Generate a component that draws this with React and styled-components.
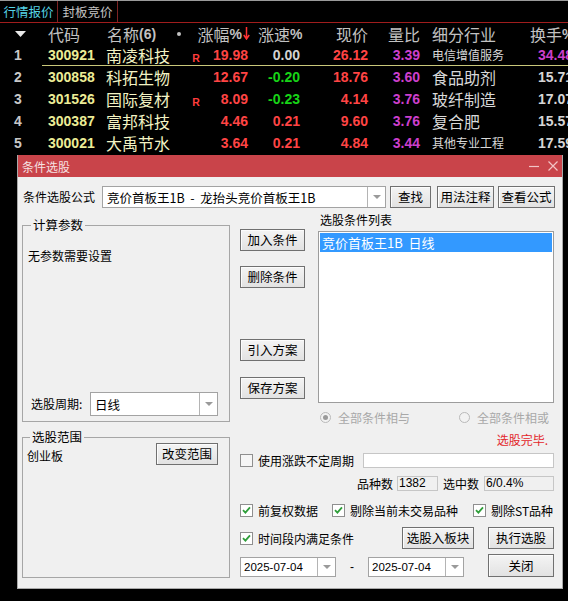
import React from 'react';
import styled, { createGlobalStyle } from 'styled-components';

const CJK = `"Noto Sans CJK SC", "Noto Sans", sans-serif`;
const NUM = `"Liberation Sans", Arial, sans-serif`;

const Global = createGlobalStyle`
  html, body { margin: 0; padding: 0; background: #000; }
  body { width: 568px; height: 601px; overflow: hidden; }
  #root { width: 568px; height: 601px; }
  * { box-sizing: border-box; }
`;

const Screen = styled.div`
  position: relative;
  width: 568px;
  height: 601px;
  background: #000;
  overflow: hidden;
  font-family: ${CJK};
`;

/* ---------- quote table ---------- */
const TabBar = styled.div`
  display: flex;
  height: 23px;
  border-top: 1px solid #9a9a9a;
  border-bottom: 1px solid #a11d1d;
`;

const Tab = styled.div`
  width: ${p => p.$w}px;
  height: 21px;
  line-height: 21px;
  text-align: center;
  font-size: 12.5px;
  color: ${p => (p.$active ? '#56d4e6' : '#c4c4c4')};
  border-right: 1px solid #7c2323;
`;

const COLS = '42px 62px 82px 18px 46px 52px 68px 52px 98px 1fr';

const HeadRow = styled.div`
  display: grid;
  grid-template-columns: ${COLS};
  height: 21px;
  align-items: center;
  color: #c2c2c2;
  font-size: 16px;
  white-space: nowrap;
`;

const Row = styled.div`
  position: relative;
  display: grid;
  grid-template-columns: ${COLS};
  height: 22px;
  align-items: center;
  white-space: nowrap;
  &::after {
    content: '';
    display: ${p => (p.$sel ? 'block' : 'none')};
    position: absolute;
    left: 42px;
    right: 0;
    bottom: 0;
    height: 1px;
    background: #c9c77a;
  }
`;

const Cell = styled.div`
  text-align: ${p => p.$align || 'left'};
  padding-left: ${p => p.$pl || 0}px;
  padding-right: ${p => p.$pr || 0}px;
  font-family: ${p => (p.$num ? NUM : CJK)};
  font-weight: ${p => (p.$num ? 700 : 400)};
  font-size: ${p => p.$fs || 14}px;
  color: ${p => p.$c || '#d0d0d0'};
  line-height: 22px;
  height: 22px;
`;

const HeadCell = styled.div`
  display: flex;
  align-items: center;
  justify-content: ${p => p.$justify || 'flex-start'};
  padding-left: ${p => p.$pl || 0}px;
  padding-right: ${p => p.$pr || 0}px;
  height: 21px;
`;

const Pct = styled.span`
  font-family: ${NUM};
  font-weight: 700;
  font-size: 14px;
`;

const HeadDot = styled.span`
  margin-left: auto;
  width: 4px;
  height: 4px;
  border-radius: 50%;
  background: #c2c2c2;
`;

const RMark = styled.div`
  font-family: ${NUM};
  font-weight: 700;
  font-size: 10.5px;
  color: #ff3c3c;
  text-align: center;
  padding-top: 5px;
  padding-left: 2px;
`;

/* ---------- dialog ---------- */
const Dialog = styled.div`
  position: absolute;
  left: 17px;
  top: 155px;
  width: 546px;
  height: 434px;
  background: #f0f0f0;
  border: 1px solid #a9a9a9;
  border-top: none;
  display: flex;
  flex-direction: column;
  font-family: ${CJK};
  font-size: 12px;
  color: #000;
`;

const TitleBar = styled.div`
  height: 22px;
  background: #c9444a;
  display: flex;
  align-items: center;
  justify-content: space-between;
  padding: 0 4px 0 4px;
  color: #f6e2e2;
  font-size: 12px;
`;

const WinCtl = styled.div`
  display: flex;
  align-items: center;
  gap: 9px;
`;

const Body = styled.div`
  padding: 9px 7px 0 4px;
  display: flex;
  flex-direction: column;
`;

const FlexRow = styled.div`
  display: flex;
  align-items: ${p => p.$align || 'center'};
  height: ${p => p.$h}px;
  margin-top: ${p => p.$mt || 0}px;
  justify-content: ${p => p.$justify || 'flex-start'};
`;

const Label = styled.span`
  width: ${p => (p.$w ? `${p.$w}px` : 'auto')};
  margin-left: ${p => p.$ml || 0}px;
  margin-right: ${p => p.$mr || 0}px;
  padding-left: ${p => p.$pl || 0}px;
  color: ${p => p.$c || '#000'};
  font-size: ${p => p.$fs || 12}px;
  line-height: 16px;
  white-space: nowrap;
  flex-shrink: 0;
`;

const Button = styled.button`
  width: ${p => p.$w}px;
  height: ${p => p.$h || 22}px;
  margin-left: ${p => p.$ml || 0}px;
  margin-top: ${p => p.$mt || 0}px;
  padding: 0;
  flex-shrink: 0;
  border: 1px solid #707070;
  background: linear-gradient(#f4f4f4, #e2e2e2);
  box-shadow: inset 1px 1px 0 #fcfcfc;
  font-family: ${CJK};
  font-size: 12.5px;
  color: #000;
  line-height: 18px;
`;

const ComboBox = styled.div`
  display: flex;
  width: ${p => p.$w}px;
  height: ${p => p.$h}px;
  flex-shrink: 0;
  background: #fff;
  border: 1px solid #a3a3a3;
`;

const ComboText = styled.div`
  flex: 1;
  padding-left: ${p => p.$pl || 4}px;
  display: flex;
  align-items: center;
  white-space: nowrap;
  overflow: hidden;
  font-family: ${p => (p.$num ? NUM : CJK)};
  font-size: ${p => (p.$num ? 11.5 : 12.5)}px;
`;

const ComboArrow = styled.div`
  width: 18px;
  border-left: 1px solid #b4b4b4;
  display: flex;
  align-items: center;
  justify-content: center;
  &::before {
    content: '';
    border-left: 4px solid transparent;
    border-right: 4px solid transparent;
    border-top: 4px solid #9a9a9a;
  }
`;

const Combo = ({ w, h, children, num, pl }) => (
  <ComboBox $w={w} $h={h}>
    <ComboText $num={num} $pl={pl}>{children}</ComboText>
    <ComboArrow />
  </ComboBox>
);

const Main = styled.div`
  display: grid;
  grid-template-columns: 208px 314px;
  column-gap: 10px;
  margin-top: 4px;
`;

const Column = styled.div`
  display: flex;
  flex-direction: column;
`;

const Group = styled.fieldset`
  margin: ${p => p.$mt}px 0 0 0;
  height: ${p => p.$h}px;
  padding: 0 ${p => p.$pr}px ${p => p.$pb || 0}px ${p => p.$pl}px;
  border: 1px solid #a6a6a6;
  min-width: 0;
`;

const GroupInner = styled.div`
  height: ${p => p.$h}px;
  display: flex;
  flex-direction: column;
`;

const Legend = styled.legend`
  margin-left: 3px;
  padding: 0 2px;
  font-size: 12.5px;
  line-height: 14px;
  color: #000;
`;

const Note = styled.div`
  margin-top: ${p => p.$mt || 0}px;
  font-size: 12px;
  line-height: 16px;
`;

const PeriodRow = styled.div`
  margin-top: auto;
  display: flex;
  align-items: center;
  justify-content: space-between;
  padding-left: 3px;
`;

const TopArea = styled.div`
  display: flex;
  gap: 13px;
`;

const BtnCol = styled.div`
  width: 65px;
  display: flex;
  flex-direction: column;
  padding-top: 17px;
`;

const ListCol = styled.div`
  width: 236px;
  display: flex;
  flex-direction: column;
`;

const ListBox = styled.div`
  margin-top: 3px;
  height: 172px;
  background: #fff;
  border: 1px solid #9c9c9c;
  padding: 1px;
`;

const ListItem = styled.div`
  height: 19px;
  line-height: 19px;
  background: ${p => (p.$sel ? '#3399ff' : 'transparent')};
  color: ${p => (p.$sel ? '#fff' : '#000')};
  padding-left: 2px;
  font-size: 13px;
`;

const RadioRow = styled.div`
  margin-top: 4px;
  height: 20px;
  display: flex;
  align-items: center;
  padding-left: 2px;
`;

const RadioItem = styled.div`
  display: flex;
  align-items: center;
  width: ${p => (p.$w ? `${p.$w}px` : 'auto')};
  gap: 7px;
  color: #a8a8a8;
  font-size: 12px;
`;

const RadioDot = styled.span`
  width: 11px;
  height: 11px;
  border-radius: 50%;
  border: 1px solid #b9b9b9;
  background: #f2f2f2;
  display: flex;
  align-items: center;
  justify-content: center;
  &::after {
    content: '';
    display: ${p => (p.$on ? 'block' : 'none')};
    width: 5px;
    height: 5px;
    border-radius: 50%;
    background: #9a9a9a;
  }
`;

const Status = styled.div`
  margin-top: 5px;
  height: 16px;
  line-height: 16px;
  text-align: right;
  padding-right: 6px;
  color: #e3262a;
  font-size: 12px;
`;

const CheckItem = styled.div`
  display: flex;
  align-items: center;
  gap: 5px;
  width: ${p => (p.$w ? `${p.$w}px` : 'auto')};
  flex-shrink: 0;
  font-size: 12px;
  white-space: nowrap;
`;

const Box = styled.span`
  width: 13px;
  height: 13px;
  border: 1px solid #8f8f8f;
  background: ${p => (p.$on ? '#fff' : '#f6f6f6')};
  display: flex;
  align-items: center;
  justify-content: center;
  flex-shrink: 0;
`;

const Check = ({ on, w, children }) => (
  <CheckItem $w={w}>
    <Box $on={on}>
      {on && (
        <svg width="9" height="8" viewBox="0 0 9 8">
          <path d="M1 4.2 L3.4 6.6 L8 1.3" fill="none" stroke="#2f9e3a" strokeWidth="1.8" />
        </svg>
      )}
    </Box>
    {children}
  </CheckItem>
);

const TextInput = styled.div`
  margin-left: ${p => (p.$auto ? 'auto' : '0')};
  width: ${p => p.$w}px;
  height: ${p => p.$h}px;
  background: ${p => (p.$ro ? '#f0f0f0' : '#fff')};
  border: 1px solid #c6c6c6;
  font-family: ${NUM};
  font-size: 12px;
  line-height: ${p => p.$h - 2}px;
  padding-left: 1px;
  flex-shrink: 0;
`;

const Dash = styled.span`
  width: 32px;
  text-align: center;
  line-height: 20px;
  font-family: ${NUM};
  font-size: 12px;
`;

const Spacer = styled.div`
  flex: 1;
`;

const rows = [
  { i: 1, code: '300921', name: '南凌科技', r: true, zf: '19.98', zs: '0.00', zsc: '#d2d2d2', xj: '26.12', lb: '3.39', hy: '电信增值服务', small: true, hs: '34.48', hsc: '#cc3fcc' },
  { i: 2, code: '300858', name: '科拓生物', r: false, zf: '12.67', zs: '-0.20', zsc: '#17d417', xj: '18.76', lb: '3.60', hy: '食品助剂', hs: '15.71' },
  { i: 3, code: '301526', name: '国际复材', r: true, zf: '8.09', zs: '-0.23', zsc: '#17d417', xj: '4.14', lb: '3.76', hy: '玻纤制造', hs: '17.07' },
  { i: 4, code: '300387', name: '富邦科技', r: false, zf: '4.46', zs: '0.21', zsc: '#ff4444', xj: '9.60', lb: '3.76', hy: '复合肥', hs: '15.57' },
  { i: 5, code: '300021', name: '大禹节水', r: false, zf: '3.64', zs: '0.21', zsc: '#ff4444', xj: '4.84', lb: '3.44', hy: '其他专业工程', small: true, hs: '17.59' },
];

const RED = '#ff4444';
const PURPLE = '#cc3fcc';

export default function App() {
  return (
    <Screen>
      <Global />
      <TabBar>
        <Tab $w={58} $active>行情报价</Tab>
        <Tab $w={60}>封板竞价</Tab>
      </TabBar>

      <HeadRow>
        <HeadCell $pl={15}>
          <svg width="11" height="6" viewBox="0 0 11 6"><path d="M0 0 H11 L5.5 6 Z" fill="#e8e8e8" /></svg>
        </HeadCell>
        <HeadCell $pl={6}>代码</HeadCell>
        <HeadCell $pl={3} $pr={5}>名称<Pct>(6)</Pct><HeadDot /></HeadCell>
        <div />
        <HeadCell $justify="flex-end" style={{ marginLeft: -8 }}>
          涨幅<Pct>%</Pct>
          <svg width="7" height="13" viewBox="0 0 7 13" style={{ marginLeft: 1 }}>
            <path d="M3.5 0 V11 M0.8 8 L3.5 12 L6.2 8" fill="none" stroke="#ff3333" strokeWidth="1.5" />
          </svg>
        </HeadCell>
        <HeadCell $pl={8}>涨速<Pct>%</Pct></HeadCell>
        <HeadCell $justify="flex-end" $pr={2}>现价</HeadCell>
        <HeadCell $justify="flex-end" $pr={2}>量比</HeadCell>
        <HeadCell $pl={10}>细分行业</HeadCell>
        <HeadCell $pl={10}>换手<Pct>%</Pct></HeadCell>
      </HeadRow>

      {rows.map(r => (
        <Row key={r.i} $sel={r.i === 1}>
          <Cell $num $pl={14} $c="#c8c8c8">{r.i}</Cell>
          <Cell $num $pl={6} $c="#ecec96">{r.code}</Cell>
          <Cell $pl={2} $fs={16} $c="#f3f3c4">{r.name}</Cell>
          {r.r ? <RMark>R</RMark> : <div />}
          <Cell $num $align="right" $pr={2} $c={RED}>{r.zf}</Cell>
          <Cell $num $align="right" $pr={2} $c={r.zsc}>{r.zs}</Cell>
          <Cell $num $align="right" $pr={2} $c={RED}>{r.xj}</Cell>
          <Cell $num $align="right" $pr={2} $c={PURPLE}>{r.lb}</Cell>
          <Cell $pl={10} $fs={r.small ? 12 : 16} $c="#d8d8d8">{r.hy}</Cell>
          <Cell $num $pl={18} $c={r.hsc || '#d6d6d6'}>{r.hs}</Cell>
        </Row>
      ))}

      <Dialog>
        <TitleBar>
          <span>条件选股</span>
          <WinCtl>
            <svg width="10" height="10" viewBox="0 0 10 10"><path d="M0 5.5 H10" stroke="#f2c4c6" strokeWidth="1.2" /></svg>
            <svg width="10" height="10" viewBox="0 0 10 10"><path d="M0.5 0.5 L9.5 9.5 M9.5 0.5 L0.5 9.5" stroke="#f2c4c6" strokeWidth="1.2" /></svg>
          </WinCtl>
        </TitleBar>

        <Body>
          <FlexRow $h={22}>
            <Label $w={80} $pl={1}>条件选股公式</Label>
            <Combo w={284} h={22}>竞价首板王1B&nbsp;&nbsp;-&nbsp;&nbsp;龙抬头竞价首板王1B</Combo>
            <Button $w={41} $ml={4}>查找</Button>
            <Button $w={57} $ml={6}>用法注释</Button>
            <Button $w={57} $ml={4}>查看公式</Button>
          </FlexRow>

          <Main>
            <Column>
              <Group $mt={6} $h={204} $pl={5} $pr={11} $pb={4}>
                <Legend>计算参数</Legend>
                <GroupInner $h={184}>
                  <Note $mt={16}>无参数需要设置</Note>
                  <PeriodRow>
                    <Label>选股周期:</Label>
                    <Combo w={128} h={24}>日线</Combo>
                  </PeriodRow>
                </GroupInner>
              </Group>
              <Group $mt={8} $h={148} $pl={4} $pr={11}>
                <Legend>选股范围</Legend>
                <FlexRow $h={22} $justify="space-between" $mt={-1}>
                  <Note $mt={4}>创业板</Note>
                  <Button $w={62}>改变范围</Button>
                </FlexRow>
              </Group>
            </Column>

            <Column>
              <TopArea>
                <BtnCol>
                  <Button $w={65}>加入条件</Button>
                  <Button $w={65} $mt={15}>删除条件</Button>
                  <Button $w={65} $mt={51}>引入方案</Button>
                  <Button $w={65} $mt={16}>保存方案</Button>
                </BtnCol>
                <ListCol>
                  <Label $pl={2}>选股条件列表</Label>
                  <ListBox>
                    <ListItem $sel>竞价首板王1B&nbsp;&nbsp;日线</ListItem>
                  </ListBox>
                  <RadioRow>
                    <RadioItem $w={139}><RadioDot $on />全部条件相与</RadioItem>
                    <RadioItem><RadioDot />全部条件相或</RadioItem>
                  </RadioRow>
                </ListCol>
              </TopArea>

              <Status>选股完毕.</Status>

              <FlexRow $h={16} $mt={4}>
                <Check>使用涨跌不定周期</Check>
                <TextInput $auto $w={191} $h={15} />
              </FlexRow>

              <FlexRow $h={15} $mt={8} $justify="flex-end">
                <Label $mr={4}>品种数</Label>
                <TextInput $w={41} $h={15} $ro>1382</TextInput>
                <Label $ml={5} $mr={5}>选中数</Label>
                <TextInput $w={70} $h={15} $ro>6/0.4%</TextInput>
              </FlexRow>

              <FlexRow $h={16} $mt={11}>
                <Check on w={92}>前复权数据</Check>
                <Check on w={141}>剔除当前未交易品种</Check>
                <Check on>剔除ST品种</Check>
              </FlexRow>

              <FlexRow $h={22} $mt={9}>
                <Check on>时间段内满足条件</Check>
                <Spacer />
                <Button $w={72}>选股入板块</Button>
                <Button $w={66} $ml={14}>执行选股</Button>
              </FlexRow>

              <FlexRow $h={23} $mt={5} $align="flex-end">
                <Combo w={96} h={20} num pl={3}>2025-07-04</Combo>
                <Dash>-</Dash>
                <Combo w={96} h={20} num pl={3}>2025-07-04</Combo>
                <Spacer />
                <Button $w={66} $h={23}>关闭</Button>
              </FlexRow>
            </Column>
          </Main>
        </Body>
      </Dialog>
    </Screen>
  );
}
